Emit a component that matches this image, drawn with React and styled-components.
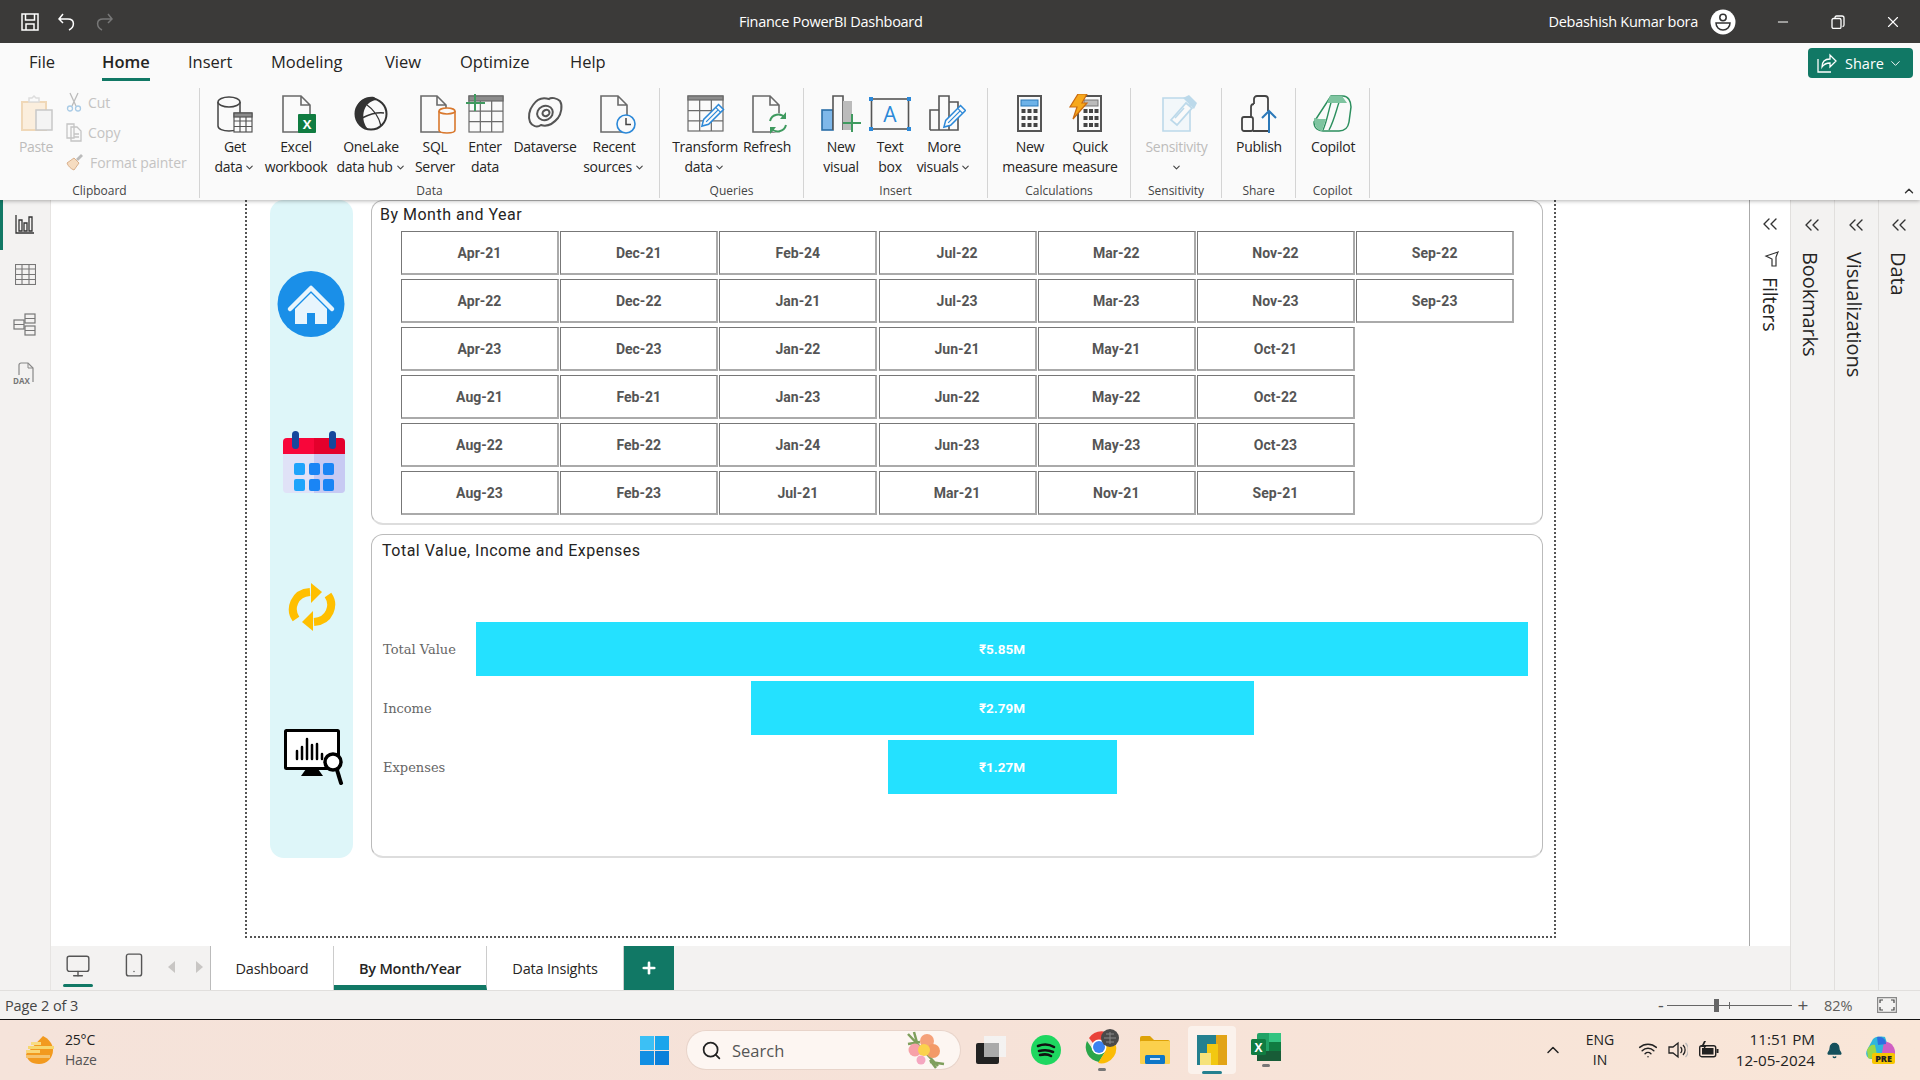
import React from "react";
import styled, { createGlobalStyle } from "styled-components";
import { Search, Wifi, Bell, Minus, X, ChevronDown, ChevronUp, ChevronsLeft, Monitor, Smartphone, Plus } from "lucide-react";

const Global = createGlobalStyle`
  html, body { margin: 0; padding: 0; background: #fff; }
  body { font-family: "Open Sans", "Noto Sans", sans-serif; overflow: hidden; }
  * { box-sizing: border-box; }
  svg { display: block; flex: none; }
`;

const Shell = styled.div`width:1920px;height:1080px;display:flex;flex-direction:column;overflow:hidden;`;
const TitleBar = styled.header`height:43px;flex:none;background:#3b3a39;color:#fff;display:flex;align-items:center;font-size:14.5px;position:relative;z-index:3;`;
const Quick = styled.div`width:739px;display:flex;align-items:center;gap:19px;padding-left:21px;`;
const DocTitle = styled.div`letter-spacing:-.28px;white-space:nowrap;`;
const UserName = styled.div`margin-left:auto;white-space:nowrap;letter-spacing:-.28px;`;
const Avatar = styled.div`width:26px;height:26px;margin-left:12px;`;
const WinBtn = styled.div`width:16px;display:flex;justify-content:center;margin-left:${p=>p.$ml}px;margin-right:${p=>p.$mr||0}px;color:#fff;`;

const RibbonWrap = styled.section`height:157px;flex:none;background:#fafafa;box-shadow:0 1px 4px rgba(0,0,0,.3);position:relative;z-index:2;`;
const TabRow = styled.nav`height:45px;display:flex;padding-left:29px;align-items:flex-start;`;
const Tab = styled.div`width:${p=>p.$w}px;flex:none;padding-top:7px;font-size:16.5px;line-height:24px;color:#252423;`;
const TabText = styled.span`display:inline-block;height:31px;font-weight:${p=>p.$active?600:400};border-bottom:${p=>p.$active?"3px solid #117865":"none"};`;
const ShareBtn = styled.div`margin-left:auto;margin-right:7px;margin-top:5px;width:105px;height:30px;background:#117865;border-radius:4px;color:#fff;display:flex;align-items:center;gap:8px;padding-left:9px;font-size:14.5px;`;
const ShareCaret = styled(ChevronDown)`margin-left:-4px;`;
const Tools = styled.div`height:112px;display:flex;`;
const Group = styled.div`width:${p=>p.$w}px;flex:none;height:110px;border-right:1px solid #d4d4d4;display:flex;flex-direction:column;`;
const GroupRow = styled.div`height:96px;display:flex;padding-left:${p=>p.$pad||0}px;`;
const GroupName = styled.div`height:14px;line-height:14px;text-align:center;font-size:12px;color:#444;white-space:nowrap;`;
const Tool = styled.div`width:${p=>p.$w}px;flex:none;display:flex;flex-direction:column;align-items:center;padding-top:6px;`;
const ToolIcon = styled.div`width:44px;height:40px;margin-bottom:3px;`;
const ToolLine = styled.div`height:20px;line-height:20px;font-size:14px;letter-spacing:-.3px;white-space:nowrap;display:flex;align-items:center;gap:2px;margin-top:${p=>p.$top||0}px;color:${p=>p.$off?"#bdbcbb":"#252423"};`;
const Clip = styled.div`display:flex;padding-left:14px;width:100%;`;
const PasteCol = styled.div`width:44px;display:flex;flex-direction:column;align-items:center;padding-top:6px;`;
const ClipList = styled.div`display:flex;flex-direction:column;margin-left:8px;margin-top:-1px;`;
const ClipItem = styled.div`height:30px;display:flex;align-items:center;gap:6px;font-size:14px;letter-spacing:-.08px;color:#c4c3c2;white-space:nowrap;`;
const Collapse = styled(ChevronUp)`margin-left:auto;margin-right:4px;margin-top:96px;`;

const Main = styled.main`flex:1;display:flex;min-height:0;`;
const Rail = styled.aside`width:51px;flex:none;background:#f3f2f1;border-right:1px solid #e6e4e2;display:flex;flex-direction:column;`;
const RailItem = styled.div`height:50px;display:flex;align-items:center;justify-content:center;border-left:3px solid ${p=>p.$active?"#117865":"transparent"};padding-right:3px;padding-bottom:2px;`;
const Center = styled.div`width:1739px;flex:none;display:flex;flex-direction:column;`;
const Stage = styled.div`height:746px;display:flex;`;
const Canvas = styled.div`width:1698px;flex:none;background:#fff;padding-left:194px;`;
const Page = styled.div`width:1311px;height:738px;border:2px dotted #555;border-top:none;display:flex;padding-left:23px;gap:18px;`;
const SideNav = styled.div`width:83px;height:658px;flex:none;background:#def6f9;border-radius:14px;display:flex;flex-direction:column;align-items:flex-start;`;
const NavIcon = styled.div`margin-top:${p=>p.$top}px;margin-left:${p=>p.$left}px;`;
const Cards = styled.div`width:1172px;flex:none;display:flex;flex-direction:column;gap:9px;`;
const Card = styled.div`height:${p=>p.$h}px;background:#fff;border:1px solid #bbb;border-bottom:2px solid #ddd;border-radius:12px;overflow:hidden;`;
const CardTitle = styled.h2`margin:0;font:400 16px/20px Roboto,sans-serif;letter-spacing:.5px;color:#252423;padding-left:${p=>p.$left}px;padding-top:${p=>p.$top}px;`;
const CellGrid = styled.div`display:grid;grid-template-columns:repeat(7,158px);column-gap:1.2px;row-gap:4px;grid-auto-rows:44px;padding:6px 0 0 29px;`;
const Cell = styled.div`border:1px solid #777;border-right:2px solid #aaa;border-bottom:2px solid #aaa;display:flex;align-items:center;justify-content:center;font:700 14px Roboto,sans-serif;color:#555;`;
const Funnel = styled.div`padding-top:61px;display:flex;flex-direction:column;gap:5px;`;
const FunnelRow = styled.div`display:flex;height:54px;align-items:center;`;
const FunnelLabel = styled.div`width:104px;flex:none;padding-left:11px;font:13px "DejaVu Serif",serif;letter-spacing:0;color:#666;`;
const Track = styled.div`width:1052px;flex:none;display:flex;justify-content:center;`;
const Bar = styled.div`height:54px;background:#24e1ff;color:#fff;display:flex;align-items:center;justify-content:center;font:700 13.5px Roboto,"DejaVu Sans",sans-serif;`;

const FilterPane = styled.div`width:41px;flex:none;background:#fff;border-left:1px solid #aaa;display:flex;flex-direction:column;align-items:center;padding-top:12px;`;
const Pane = styled.div`width:${p=>p.$w}px;flex:none;background:#f3f2f1;border-left:1px solid #e1dfdd;display:flex;flex-direction:column;align-items:center;padding-top:13px;`;
const PaneChevron = styled(ChevronsLeft)`margin-right:2px;`;
const FilterIcon = styled.svg`margin-top:15px;margin-left:3px;`;
const PaneText = styled.div`writing-mode:vertical-rl;font-size:${p=>p.$s||20}px;letter-spacing:-.1px;color:#252423;margin-top:${p=>p.$top}px;margin-right:${p=>p.$mr||0}px;white-space:nowrap;`;
const PageBar = styled.div`height:44px;flex:none;display:flex;background:#f3f2f1;`;
const ViewTools = styled.div`width:160px;flex:none;display:flex;align-items:flex-start;border-right:1px solid #bbb;`;
const ViewBtn = styled.div`margin-left:${p=>p.$ml}px;margin-top:${p=>p.$mt}px;color:#555;display:flex;flex-direction:column;align-items:center;`;
const ViewLine = styled.div`width:30px;height:3px;border-radius:2px;background:#117865;margin-top:5px;`;
const PageTab = styled.div`width:${p=>p.$w}px;flex:none;background:#fff;border-right:1px solid #ccc;display:flex;align-items:center;justify-content:center;font-size:14.5px;letter-spacing:-.2px;color:#252423;font-weight:${p=>p.$active?600:400};border-bottom:${p=>p.$active?"5px solid #117865":"none"};padding-top:${p=>p.$active?"5px":"0"};`;
const AddTab = styled.div`width:50px;flex:none;background:#117865;color:#fff;display:flex;align-items:center;justify-content:center;`;

const Status = styled.div`height:30px;flex:none;background:#f3f2f1;border-top:1px solid #e1dfdd;border-bottom:1px solid #111;display:flex;align-items:center;padding-left:5px;font-size:14.5px;letter-spacing:-.1px;color:#444;position:relative;z-index:1;`;
const ZoomWrap = styled.div`margin-left:auto;display:flex;align-items:center;padding-right:23px;`;
const ZoomSign = styled.span`font-size:${p=>p.$s}px;color:#555;width:${p=>p.$w}px;margin-left:${p=>p.$ml||0}px;text-align:center;line-height:1;`;
const Slider = styled.div`width:125px;height:1px;background:#666;margin-left:4px;position:relative;`;
const Thumb = styled.span`position:absolute;left:47px;top:-6px;width:5px;height:13px;background:#666;`;
const Tick = styled.span`position:absolute;left:62px;top:-3px;width:1px;height:7px;background:#666;`;
const ZoomPct = styled.div`margin-left:15px;width:33px;font-size:14.5px;letter-spacing:-.1px;color:#605e5c;`;
const FitIcon = styled.svg`margin-left:20px;`;

const Taskbar = styled.footer`height:60px;flex:none;background:linear-gradient(90deg,#f5e3da,#f6e2d8 50%,#f9e6d8);display:flex;align-items:center;`;
const Weather = styled.div`width:640px;flex:none;display:flex;align-items:center;padding-left:25px;gap:10px;`;
const WeatherText = styled.div`font-size:14px;line-height:20px;letter-spacing:-.2px;color:#222;`;
const Dim = styled.div`color:#555;`;
const Dock = styled.div`display:flex;align-items:center;`;
const DockItem = styled.div`margin-left:${p=>p.$ml||0}px;`;
const SearchPill = styled.div`width:273px;height:38px;margin-left:18px;border-radius:19px;background:#fdf6f2;box-shadow:0 0 0 1px #e8d4ca;display:flex;align-items:center;padding:0 12px 0 14px;font-size:16.5px;color:#555;gap:10px;`;
const Flower = styled.div`margin-left:auto;`;
const ActiveApp = styled.div`width:48px;height:48px;margin-left:18px;border-radius:4px;background:#fbf2ec;display:flex;flex-direction:column;align-items:center;padding-top:9px;`;
const AppDot = styled.div`width:20px;height:3px;border-radius:2px;background:#25808f;margin-top:6px;`;
const RunDot = styled.div`width:8px;height:3px;margin:3px auto 0;border-radius:2px;background:#777;`;
const Tray = styled.div`margin-left:auto;padding-right:25px;display:flex;align-items:center;color:#222;`;
const TrayItem = styled.div`margin-left:${p=>p.$ml}px;`;
const Lang = styled.div`width:30px;font-size:14px;line-height:20px;text-align:center;`;
const Clock = styled.div`width:80px;font-size:15.2px;line-height:21px;text-align:right;white-space:nowrap;`;

const G = "#6a6a6a";
const Doc = ({x=9,w=26,c=G,y=2,h=36}) => <path d={`M${x} ${y}h${w-9}l9 9v${h-9}h-${w}z M${x+w-9} ${y}v9h9`} fill="#fafafa" stroke={c} strokeWidth="1.6"/>;
const I = ({children}) => <svg width="44" height="40" viewBox="0 0 44 40">{children}</svg>;
const MiniTable = ({x,y,w,h,c=G,band=4}) => <g stroke={c} strokeWidth="1.2" fill="#fafafa"><rect x={x} y={y} width={w} height={h}/><rect x={x} y={y} width={w} height={band} fill="#8c8c8c"/><path d={`M${x+w/3} ${y+band}V${y+h}M${x+2*w/3} ${y+band}V${y+h}M${x} ${y+h*.42}H${x+w}M${x} ${y+h*.71}H${x+w}`}/></g>;
const Pencil = ({x1,y1}) => <g transform={`translate(${x1} ${y1}) rotate(45)`}><path d="M-3.500 0h7v21l-3.500 6-3.500-6z" fill="#fafafa" stroke="#2b88d8" strokeWidth="1.5"/><path d="M-3.500 4h7M0 4v17" stroke="#2b88d8" strokeWidth="1.200"/></g>;

const icons = {
  getData:<I><path d="M5 8v24c0 3 5 5 11 5s11-2 11-5V8" fill="#fafafa" stroke="#444" strokeWidth="1.5"/><ellipse cx="16" cy="8" rx="11" ry="5" fill="#fafafa" stroke="#444" strokeWidth="1.5"/><MiniTable x={21} y={19} w={18} h={19} c="#555"/></I>,
  excel:<I><Doc x={9} w={27}/><rect x="24" y="20" width="18" height="19" rx="1" fill="#107c41"/><text x="33" y="35" textAnchor="middle" fontSize="13" fontWeight="700" fill="#fff" fontFamily="Open Sans">X</text></I>,
  onelake:<I><circle cx="22" cy="20" r="15.5" fill="#fafafa" stroke="#333" strokeWidth="2"/><path d="M8 14C9 6 17 2 25 3c2 1 4 3 4 3-9 0-17 8-14 22 1 3 2 5 4 7C10 33 4 24 8 14z" fill="#333"/><path d="M18 11c6 4 12 12 14 21M13 24c6-3 14-6 22-5" fill="none" stroke="#333" strokeWidth="1.4"/></I>,
  sql:<I><Doc x={8} w={25}/><path d="M26 17v19c0 4 16 4 16 0V17" fill="#fafafa" stroke="#d9782d" strokeWidth="1.6"/><ellipse cx="34" cy="17" rx="8" ry="3" fill="#fafafa" stroke="#d9782d" strokeWidth="1.6"/></I>,
  enter:<I><MiniTable x={6} y={2} w={34} h={36} band={5}/><path d="M12 0v17M3 9h19" stroke="#3f9a5f" strokeWidth="2" fill="none"/></I>,
  dataverse:<I><g fill="none" stroke="#555" strokeWidth="2"><path d="M10 11c4-6 10-8 16-6 2-2 8-1 11 2 3 5 1 13-2 17-5 6-11 9-17 7-4 3-9 1-11-3-2-5-1-12 3-17z" /><ellipse cx="22" cy="19" rx="8" ry="7" transform="rotate(-25 22 19)"/><ellipse cx="23" cy="19" rx="3.6" ry="3" transform="rotate(-25 23 19)"/></g></I>,
  recent:<I><Doc x={9} w={26}/><circle cx="34" cy="30" r="9" fill="#fafafa" stroke="#2b88d8" strokeWidth="1.6"/><path d="M34 24v6.500h5" fill="none" stroke="#444" strokeWidth="1.5"/></I>,
  transform:<I><MiniTable x={5} y={2} w={35} h={35}/><Pencil x1={38} y1={13}/></I>,
  refresh:<I><Doc x={8} w={26}/><circle cx="33" cy="29" r="10" fill="#fafafa"/><path d="M25 27a8.500 8.500 0 0 1 15-3M41 31a8.500 8.500 0 0 1-15 3" fill="none" stroke="#3f9a5f" strokeWidth="2"/><path d="M41 18v7h-6zM25 40v-7h6z" fill="#3f9a5f"/></I>,
  newVisual:<I><rect x="3" y="16" width="11" height="20" fill="#7fb8ea" stroke="#2b6fa8" strokeWidth="1.6"/><path d="M14 36V2h10v34" fill="#fafafa" stroke="#555" strokeWidth="1.6"/><rect x="24" y="7" width="9" height="29" fill="#bbb"/><path d="M33 20v18M24 29h18" stroke="#3f9a5f" strokeWidth="2"/></I>,
  textBox:<I><rect x="3.500" y="5" width="37" height="30" fill="#fafafa" stroke="#555" strokeWidth="1.6"/><g fill="#2b88d8"><rect x="1" y="3" width="4" height="4"/><rect x="39" y="3" width="4" height="4"/><rect x="1" y="33" width="4" height="4"/><rect x="39" y="33" width="4" height="4"/></g><text x="22" y="28" textAnchor="middle" fontSize="21" fill="#2b88d8" fontFamily="Open Sans">A</text></I>,
  moreVisuals:<I><path d="M8 36V16h9M17 36V2h10v34M27 8h9v28H8" fill="#fafafa" stroke="#555" strokeWidth="1.6"/><Pencil x1={41} y1={14}/></I>,
  newMeasure:<I><rect x="10" y="2" width="23" height="35" fill="#fafafa" stroke="#555" strokeWidth="2"/><rect x="13" y="6" width="17" height="6" fill="#6db2e8" stroke="#2b78b8"/>{[15,22,29].flatMap(y=>[13.5,19.5,25.5].map(x=><rect key={x+"-"+y} x={x} y={y} width="4" height="4" fill="#444"/>))}</I>,
  quick:<I><rect x="10" y="2" width="23" height="35" fill="#fafafa" stroke="#555" strokeWidth="2"/><rect x="16" y="6" width="14" height="6" fill="#bbb" stroke="#777"/>{[15,22,29].flatMap(y=>[15.5,21,26.5].map(x=><rect key={x+"-"+y} x={x} y={y} width="4" height="4" fill="#444"/>))}<path d="M10 0h9l-5 9h5L5 25l4-12H2z" fill="#f6a81c" stroke="#c96a10" strokeWidth="1.2"/></I>,
  sensitivity:<I><path d="M8 4h27v33H8z" fill="#f2f7fa" stroke="#bcd9ea" strokeWidth="1.6"/><path d="M16 26 31 9l6 5-15 17z" fill="#fafafa" stroke="#bcd9ea" strokeWidth="1.8"/><path d="M20 24l9-10" stroke="#bcd9ea" strokeWidth="1.6"/><path d="M28 4l6-3 8 8-3 6z" fill="#bcd9ea"/></I>,
  publish:<I><rect x="5" y="23" width="11" height="14" rx="2" fill="none" stroke="#444" strokeWidth="1.8"/><path d="M16 37h15M14 23V13a3 3 0 0 1 3-3h0M17 10V5a3 3 0 0 1 3-3h8a3 3 0 0 1 3 3v12" fill="none" stroke="#444" strokeWidth="1.8"/><path d="M32 39V17M25 24l7-7 7 7" fill="none" stroke="#2b78b8" strokeWidth="2"/></I>,
  copilot:<I><path d="M20 2h12c5 0 8 5 8 11l-2 15c-1 6-5 9-10 9H12c-5 0-9-3-9-9z" fill="#fafafa" stroke="#2c8f5e" strokeWidth="1.5"/><path d="M12 36C17 25 18 12 22 3M18 36c6-11 8-24 12-33" fill="none" stroke="#2c8f5e" strokeWidth="1.4"/><path d="M19 2h12l5 7H16zM3 24c3 1 8 1 12 1l-4 12c-4 0-8-5-8-13z" fill="#7fc4a0"/></I>,
};
const Caret = () => <ChevronDown size={11} strokeWidth={2.4} color="#444"/>;

const groups = [
  {name:"Data",w:460,pad:5,tools:[
    {k:"getData",w:60,l:["Get","data"],c:1},{k:"excel",w:62,l:["Excel","workbook"]},{k:"onelake",w:88,l:["OneLake","data hub"],c:1},{k:"sql",w:40,l:["SQL","Server"]},{k:"enter",w:60,l:["Enter","data"]},{k:"dataverse",w:60,l:["Dataverse"]},{k:"recent",w:78,l:["Recent","sources"],c:1}]},
  {name:"Queries",w:144,pad:5,tools:[{k:"transform",w:80,l:["Transform","data"],c:1},{k:"refresh",w:44,l:["Refresh"]}]},
  {name:"Insert",w:184,pad:11,tools:[{k:"newVisual",w:52,l:["New","visual"]},{k:"textBox",w:46,l:["Text","box"]},{k:"moreVisuals",w:62,l:["More","visuals"],c:1}]},
  {name:"Calculations",w:143,pad:8,tools:[{k:"newMeasure",w:68,l:["New","measure"]},{k:"quick",w:52,l:["Quick","measure"]}]},
  {name:"Sensitivity",w:91,pad:0,tools:[{k:"sensitivity",w:91,l:["Sensitivity",""],c:1,off:1}]},
  {name:"Share",w:74,pad:0,tools:[{k:"publish",w:74,l:["Publish"]}]},
  {name:"Copilot",w:74,pad:0,tools:[{k:"copilot",w:74,l:["Copilot"]}]},
];
const tabs = [["File",73],["Home",86,1],["Insert",83],["Modeling",114],["View",75],["Optimize",110],["Help",60]];
const months = ["Apr-21","Dec-21","Feb-24","Jul-22","Mar-22","Nov-22","Sep-22","Apr-22","Dec-22","Jan-21","Jul-23","Mar-23","Nov-23","Sep-23","Apr-23","Dec-23","Jan-22","Jun-21","May-21","Oct-21",null,"Aug-21","Feb-21","Jan-23","Jun-22","May-22","Oct-22",null,"Aug-22","Feb-22","Jan-24","Jun-23","May-23","Oct-23",null,"Aug-23","Feb-23","Jul-21","Mar-21","Nov-21","Sep-21"];
const bars = [["Total Value","₹5.85M",1052],["Income","₹2.79M",503],["Expenses","₹1.27M",229]];

const S = {fill:"none",stroke:"#fff",strokeWidth:1.5};
export default function App(){
  return <Shell><Global/>
    <TitleBar>
      <Quick>
        <svg width="18" height="18" viewBox="0 0 18 18" {...S}><path d="M1 1h16v16H1zM4.500 1v6h9V1M5 17v-6h8v6"/></svg>
        <svg width="18" height="18" viewBox="0 0 18 18" {...S}><path d="M5 1 1 6l4 4M1 6h9c7 0 7 8 1 11"/></svg>
        <svg width="18" height="18" viewBox="0 0 18 18" {...S} stroke="#777"><path d="M13 1l4 5-4 4M17 6H8c-7 0-7 8-1 11"/></svg>
      </Quick>
      <DocTitle>Finance PowerBI Dashboard</DocTitle>
      <UserName>Debashish Kumar bora</UserName>
      <Avatar><svg width="26" height="26" viewBox="0 0 26 26"><circle cx="13" cy="13" r="12.500" fill="#fff"/><circle cx="13" cy="8.500" r="3.200" fill="none" stroke="#333" strokeWidth="1.500"/><path d="M6 14h14c0 4-3 7-7 7s-7-3-7-7z" fill="none" stroke="#333" strokeWidth="1.500"/></svg></Avatar>
      <WinBtn $ml={39}><Minus size={16} strokeWidth={1.5}/></WinBtn>
      <WinBtn $ml={39}><svg width="14" height="14" viewBox="0 0 14 14" fill="none" stroke="#fff" strokeWidth="1.300"><rect x="1" y="3.500" width="9" height="10" rx="1.500"/><path d="M4 3V2.500A1.500 1.500 0 0 1 5.500 1H11a2 2 0 0 1 2 2v7a1.500 1.500 0 0 1-1.500 1.500"/></svg></WinBtn>
      <WinBtn $ml={39} $mr={19}><X size={18} strokeWidth={1.5}/></WinBtn>
    </TitleBar>

    <RibbonWrap>
      <TabRow>
        {tabs.map(([t,w,a])=><Tab key={t} $w={w}><TabText $active={a}>{t}</TabText></Tab>)}
        <ShareBtn>
          <svg width="20" height="20" viewBox="0 0 20 20" fill="none" stroke="#fff" strokeWidth="1.300"><path d="M1 6v13h13M5 14c0-5 3-8 8-8V2l6 6-6 6V10c-4 0-6 1-8 4z"/></svg>
          Share<ShareCaret size={15} strokeWidth={1.5}/>
        </ShareBtn>
      </TabRow>
      <Tools>
        <Group $w={200}>
          <GroupRow>
            <Clip>
              <PasteCol>
                <svg width="40" height="40" viewBox="0 0 40 40"><path d="M6 8h24v28H6z" fill="#fbeedd" stroke="#f0d8b8" strokeWidth="2"/><path d="M13 8V4h3l2-2 2 2h3v4z" fill="#fafafa" stroke="#ddd" strokeWidth="1.500"/><rect x="20" y="16" width="16" height="20" fill="#f4f4f4" stroke="#c8c8c8" strokeWidth="1.500"/></svg>
                <ToolLine $off $top={3}>Paste</ToolLine>
              </PasteCol>
              <ClipList>
                <ClipItem><svg width="16" height="20" viewBox="0 0 16 20" fill="none" stroke="#bbb" strokeWidth="1.300"><path d="M4 1l6 13M12 1 6 14"/><circle cx="4" cy="16.500" r="2.500" stroke="#a9cbe6"/><circle cx="12" cy="16.500" r="2.500" stroke="#a9cbe6"/></svg>Cut</ClipItem>
                <ClipItem><svg width="16" height="20" viewBox="0 0 16 20" fill="none" stroke="#c4c4c4" strokeWidth="1.300"><path d="M1 2h7v14H1zM5 5h6l4 4v10H5zM8 12h5M8 15h5"/></svg>Copy</ClipItem>
                <ClipItem><svg width="18" height="18" viewBox="0 0 18 18"><path d="M1 10 8 5l5 5-5 7c-3-1-6-4-7-7z" fill="#f6dcc0" stroke="#d9b08c"/><path d="M10 6l5-5 2 2-5 5z" fill="#bbb"/></svg>Format painter</ClipItem>
              </ClipList>
            </Clip>
          </GroupRow>
          <GroupName>Clipboard</GroupName>
        </Group>
        {groups.map(g=><Group key={g.name} $w={g.w}>
          <GroupRow $pad={g.pad}>
            {g.tools.map(t=><Tool key={t.k} $w={t.w}>
              <ToolIcon>{icons[t.k]}</ToolIcon>
              {t.l.map((line,i)=><ToolLine key={i} $off={t.off}>{line}{t.c&&i===t.l.length-1?<Caret/>:null}</ToolLine>)}
            </Tool>)}
          </GroupRow>
          <GroupName>{g.name}</GroupName>
        </Group>)}
        <Collapse size={14} strokeWidth={2.4} color="#333"/>
      </Tools>
    </RibbonWrap>

    <Main>
      <Rail>
        <RailItem $active><svg width="20" height="20" viewBox="0 0 20 20" fill="none" stroke="#333" strokeWidth="1.300"><path d="M1 1v18h18M4 6h3v11H4zM9 9h3v8H9zM14 3h3v14h-3z"/></svg></RailItem>
        <RailItem><svg width="21" height="21" viewBox="0 0 21 21" fill="none" stroke="#777" strokeWidth="1.100"><rect x=".5" y=".5" width="20" height="20"/><path d="M.5 5h20M.5 10.500h20M.5 15.500h20M7 1v20M14 1v20"/></svg></RailItem>
        <RailItem><svg width="24" height="24" viewBox="0 0 24 24" fill="none" stroke="#777" strokeWidth="1.200"><rect x="1" y="8" width="10" height="9"/><rect x="12" y="2" width="10" height="9"/><rect x="12" y="14" width="10" height="9"/><path d="M1 12.500h10M12 6.500h10M12 18.500h10"/></svg></RailItem>
        <RailItem><svg width="26" height="24" viewBox="0 0 26 24"><path d="M7 13V3a2 2 0 0 1 2-2h7l5 5v14" fill="none" stroke="#888" strokeWidth="1.200"/><path d="M16 1v5h5" fill="none" stroke="#888"/><text x="1" y="22" fontSize="8" fontWeight="700" fill="#777" fontFamily="Open Sans">DAX</text></svg></RailItem>
      </Rail>
      <Center>
        <Stage>
          <Canvas>
            <Page>
              <SideNav>
                <NavIcon $top={71} $left={7}>
                  <svg width="68" height="66" viewBox="0 0 68 66"><ellipse cx="34" cy="33" rx="33.500" ry="33" fill="#1a8fe8"/><path d="M13 38 34 17l21 21" fill="none" stroke="#e8f5fd" strokeWidth="4.500" strokeLinecap="round" strokeLinejoin="round"/><path d="M18 38 34 22l16 16v15H38V42h-8v11H18z" fill="#e8f5fd"/></svg>
                </NavIcon>
                <NavIcon $top={94} $left={13}>
                  <svg width="62" height="62" viewBox="0 0 62 62"><rect y="7" width="62" height="55" rx="4" fill="#e0e2f7"/><path d="M31 7h27a4 4 0 0 1 4 4v47a4 4 0 0 1-4 4H31z" fill="#c7caf3"/><path d="M0 22V11a4 4 0 0 1 4-4h27v16H0z" fill="#f8063a"/><path d="M31 7h27a4 4 0 0 1 4 4v12H31z" fill="#e4002c"/><rect x="9" y="0" width="7" height="18" rx="3.500" fill="#15479c"/><rect x="46" y="0" width="7" height="18" rx="3.500" fill="#15479c"/>{[32,48].flatMap(y=>[11,26,40].map((x,i)=><rect key={x+"-"+y} x={x} y={y} width="11" height="12" rx="2" fill={i===0?"#1ea4fb":"#1a85f5"}/>))}</svg>
                </NavIcon>
                <NavIcon $top={90} $left={18}>
                  <svg width="48" height="48" viewBox="0 0 48 48" fill="none" stroke="#ffbf00" strokeWidth="8"><path d="M8 36C1 26 6 10 22 9"/><path d="M40 12c7 10 2 26-14 27"/><path d="M23 0l11 9-11 11z" fill="#ffbf00" stroke="none"/><path d="M25 48 14 39l11-11z" fill="#ffbf00" stroke="none"/></svg>
                </NavIcon>
                <NavIcon $top={98} $left={14}>
                  <svg width="60" height="56" viewBox="0 0 60 56"><rect x="1.500" y="1.500" width="53" height="38" rx="1" fill="#fff" stroke="#000" strokeWidth="3"/><path d="M17 47l5-7h12l5 7z" fill="#000"/><g stroke="#000" strokeWidth="2.500" strokeLinecap="round"><path d="M13 22v8M18 18v12M23 10v20M28 16v14M33 15v15M38 25v5"/></g><circle cx="49" cy="33" r="8" fill="#fff" stroke="#000" strokeWidth="3.500"/><path d="M53 41l4 13" stroke="#000" strokeWidth="4" strokeLinecap="round"/></svg>
                </NavIcon>
              </SideNav>
              <Cards>
                <Card $h={325}>
                  <CardTitle $left={8} $top={4}>By Month and Year</CardTitle>
                  <CellGrid>{months.map((m,i)=>m?<Cell key={m}>{m}</Cell>:<span key={i}/>)}</CellGrid>
                </Card>
                <Card $h={324}>
                  <CardTitle $left={10} $top={6}>Total Value, Income and Expenses</CardTitle>
                  <Funnel>{bars.map(([l,v,w])=><FunnelRow key={l}><FunnelLabel>{l}</FunnelLabel><Track><Bar style={{width:w}}>{v}</Bar></Track></FunnelRow>)}</Funnel>
                </Card>
              </Cards>
            </Page>
          </Canvas>
          <FilterPane>
            <ChevronsLeft size={24} strokeWidth={1.4} color="#333"/>
            <FilterIcon width="16" height="16" viewBox="0 0 16 16" fill="none" stroke="#333" strokeWidth="1.200"><path d="M14 1 2 5l6 3v7l4 0V6z"/></FilterIcon>
            <PaneText $s={19.5} $top={10}>Filters</PaneText>
          </FilterPane>
        </Stage>
        <PageBar>
          <ViewTools>
            <ViewBtn $ml={12} $mt={7}><Monitor size={26} strokeWidth={1.300} color="#555"/><ViewLine/></ViewBtn>
            <ViewBtn $ml={28} $mt={6}><Smartphone size={26} strokeWidth={1.300} color="#555"/></ViewBtn>
            <ViewBtn $ml={21} $mt={15}><svg width="8" height="12" viewBox="0 0 8 12"><path d="M7 0v12L0 6z" fill="#c8c6c4"/></svg></ViewBtn>
            <ViewBtn $ml={19} $mt={15}><svg width="8" height="12" viewBox="0 0 8 12"><path d="M1 0v12l7-6z" fill="#c8c6c4"/></svg></ViewBtn>
          </ViewTools>
          <PageTab $w={123}>Dashboard</PageTab>
          <PageTab $w={153} $active>By Month/Year</PageTab>
          <PageTab $w={137}>Data Insights</PageTab>
          <AddTab><Plus size={18} strokeWidth={3.5}/></AddTab>
        </PageBar>
      </Center>
      <Pane $w={44}><PaneChevron size={24} strokeWidth={1.4} color="#333"/><PaneText $top={15} $mr={4}>Bookmarks</PaneText></Pane>
      <Pane $w={44}><PaneChevron size={24} strokeWidth={1.4} color="#333"/><PaneText $top={15} $mr={4}>Visualizations</PaneText></Pane>
      <Pane $w={42}><PaneChevron size={24} strokeWidth={1.4} color="#333"/><PaneText $top={15} $mr={3}>Data</PaneText></Pane>
    </Main>

    <Status>
      Page 2 of 3
      <ZoomWrap>
        <ZoomSign $s={18} $w={5}>-</ZoomSign>
        <Slider><Thumb/><Tick/></Slider>
        <ZoomSign $s={19} $w={12} $ml={5}>+</ZoomSign>
        <ZoomPct>82%</ZoomPct>
        <FitIcon width="20" height="16" viewBox="0 0 20 16" fill="none" stroke="#666"><rect x=".5" y=".5" width="19" height="15" strokeWidth="1.500" stroke="#888"/><path d="M3 6V3h3M14 3h3v3M17 10v3h-3M6 13H3v-3" strokeWidth="1.200" stroke="#444"/></FitIcon>
      </ZoomWrap>
    </Status>

    <Taskbar>
      <Weather>
        <svg width="30" height="28" viewBox="0 0 30 28"><path d="M18 0c6 3 10 8 10 14 0 8-6 14-14 14S2 24 1 18z" fill="#f29a1f"/><g fill="#f8dc82"><rect x="6" y="6" width="10" height="3"/><rect x="3" y="10" width="26" height="3" fill="#f7d76e"/><rect x="1" y="14" width="14" height="3" fill="#f9d778"/><rect x="1" y="19" width="24" height="3" fill="#f5c36e"/></g></svg>
        <WeatherText>25°C<Dim>Haze</Dim></WeatherText>
      </Weather>
      <Dock>
        <svg width="29" height="29" viewBox="0 0 29 29"><rect width="14" height="14" fill="#3cc0f5"/><rect x="15" width="14" height="14" fill="#1aa5ec"/><rect y="15" width="14" height="14" fill="#128fe3"/><rect x="15" y="15" width="14" height="14" fill="#0b80da"/></svg>
        <SearchPill>
          <Search size={21} color="#222" strokeWidth={2}/>Search
          <Flower><svg width="42" height="40" viewBox="0 0 42 40"><path d="M2 4l30 32M8 2l4 14M2 14l12-2M38 34l-14-2M30 38l-6-8" stroke="#7f9f5c" strokeWidth="2.500" fill="none"/><circle cx="21" cy="11" r="7" fill="#f5a17a"/><circle cx="27" cy="21" r="7" fill="#f39a68"/><circle cx="9" cy="20" r="6.500" fill="#f7a1a8"/><circle cx="18" cy="20" r="6" fill="#fbd24c"/><circle cx="15" cy="30" r="4.500" fill="#f5a6c0"/></svg></Flower>
        </SearchPill>
        <DockItem $ml={16}><svg width="30" height="28" viewBox="0 0 30 28"><rect y="7" width="23" height="21" rx="2" fill="#222"/><rect x="8" y="0" width="22" height="21" fill="#f4f4f4" opacity=".9"/><rect x="8" y="7" width="15" height="14" fill="#aaa"/></svg></DockItem>
        <DockItem $ml={25}><svg width="30" height="30" viewBox="0 0 30 30"><circle cx="15" cy="15" r="15" fill="#1ed760"/><g fill="none" stroke="#111" strokeWidth="2.600" strokeLinecap="round"><path d="M7 11c5-2 11-2 16 1"/><path d="M8 16c4-1 10-1 14 1"/><path d="M9 20c4-1 8-1 11 1"/></g></svg></DockItem>
        <DockItem $ml={23}>
          <svg width="36" height="36" viewBox="0 0 36 36"><path d="M15 21 5 8a15 15 0 0 1 25 0z" fill="#e9433a" transform="translate(0 1)"/><path d="M3 11a15 15 0 0 0 12 21l6-10-11-1z" fill="#2aa64a" transform="translate(0 1)"/><path d="M29 9a15 15 0 0 1-15 24l7-11 1-13z" fill="#fbbc05" transform="translate(0 1)"/><circle cx="15" cy="18" r="7.500" fill="#fff"/><circle cx="15" cy="18" r="6" fill="#3b82f0"/><circle cx="26" cy="9" r="9" fill="#4a4a4a"/><path d="M20 9h12M26 3v12M22 5h8M22 13h8" stroke="#888" strokeWidth="1" fill="none"/></svg>
          <RunDot/>
        </DockItem>
        <DockItem $ml={20}><svg width="30" height="28" viewBox="0 0 30 28"><path d="M0 2a2 2 0 0 1 2-2h8l4 4h14a2 2 0 0 1 2 2v3H0z" fill="#dea208"/><rect y="5" width="30" height="23" rx="1" fill="#fbd04c"/><rect x="5" y="19" width="20" height="9" rx="1.500" fill="#0f77c7"/><rect x="10" y="22" width="10" height="2" fill="#cde4f7"/></svg></DockItem>
        <ActiveApp>
          <svg width="30" height="30" viewBox="0 0 30 30"><rect width="30" height="30" fill="#24808f"/><rect x="19" width="11" height="30" fill="#e2a417"/><rect x="10" y="9" width="11" height="21" fill="#f2c811"/><rect x="3" y="18" width="11" height="12" fill="#f6e27a"/></svg>
          <AppDot/>
        </ActiveApp>
        <DockItem $ml={15}>
          <svg width="30" height="28" viewBox="0 0 30 28"><rect x="6" width="24" height="28" rx="2" fill="#21a366"/><rect x="18" width="12" height="9" fill="#33c481"/><rect x="6" y="18" width="24" height="10" fill="#185c37"/><rect x="18" y="9" width="12" height="9" fill="#107c41"/><rect y="6" width="15" height="16" rx="1.500" fill="#107c41"/><text x="7.500" y="19" textAnchor="middle" fontSize="12" fontWeight="700" fill="#fff" fontFamily="Open Sans">X</text></svg>
          <RunDot/>
        </DockItem>
      </Dock>
      <Tray>
        <ChevronUp size={20} strokeWidth={1.800} color="#222"/>
        <TrayItem $ml={22}><Lang>ENG<br/>IN</Lang></TrayItem>
        <TrayItem $ml={23}><Wifi size={20} strokeWidth={1.800}/></TrayItem>
        <TrayItem $ml={10}><svg width="20" height="20" viewBox="0 0 20 20" fill="none" stroke="#222" strokeWidth="1.300"><path d="M1 7h4l5-4v14l-5-4H1zM12.500 7a4 4 0 0 1 0 6M15 5a7 7 0 0 1 0 10"/><path d="M17.500 3a10 10 0 0 1 0 14" stroke="#bbb"/></svg></TrayItem>
        <TrayItem $ml={11}><svg width="20" height="18" viewBox="0 0 20 18"><rect x=".7" y="4.700" width="16" height="11" rx="2" fill="none" stroke="#222" strokeWidth="1.400"/><rect x="3" y="7" width="11.500" height="6.500" fill="#222"/><rect x="17.500" y="8" width="2" height="4" fill="#222"/><path d="M5 0 2 6h3l-1 4 4-6H5l2-4z" fill="#222"/></svg></TrayItem>
        <TrayItem $ml={16}><Clock>11:51 PM<br/>12-05-2024</Clock></TrayItem>
        <TrayItem $ml={11}><Bell size={17} fill="#15505c" color="#15505c"/></TrayItem>
        <TrayItem $ml={23}><svg width="29" height="28" viewBox="0 0 29 28"><path d="M7 3c2-3 9-3 12-2l4 12-9 10H6C1 23-1 18 1 14z" fill="#2fb8dc"/><path d="M1 14c2-4 5-6 8-5l2 10c-2 3-7 5-9 3z" fill="#9dd848"/><path d="M18 6c5-1 10 3 11 9s-4 9-9 8l-5-1z" fill="#d05fc3"/><path d="M11 1c5-1 9 2 9 7l-8 1z" fill="#2f6fe0"/><rect x="6" y="17" width="23" height="11" rx="2" fill="#f7c600"/><text x="17.500" y="26" textAnchor="middle" fontSize="9" fontWeight="800" fill="#222" fontFamily="Open Sans">PRE</text></svg></TrayItem>
      </Tray>
    </Taskbar>
  </Shell>;
}
